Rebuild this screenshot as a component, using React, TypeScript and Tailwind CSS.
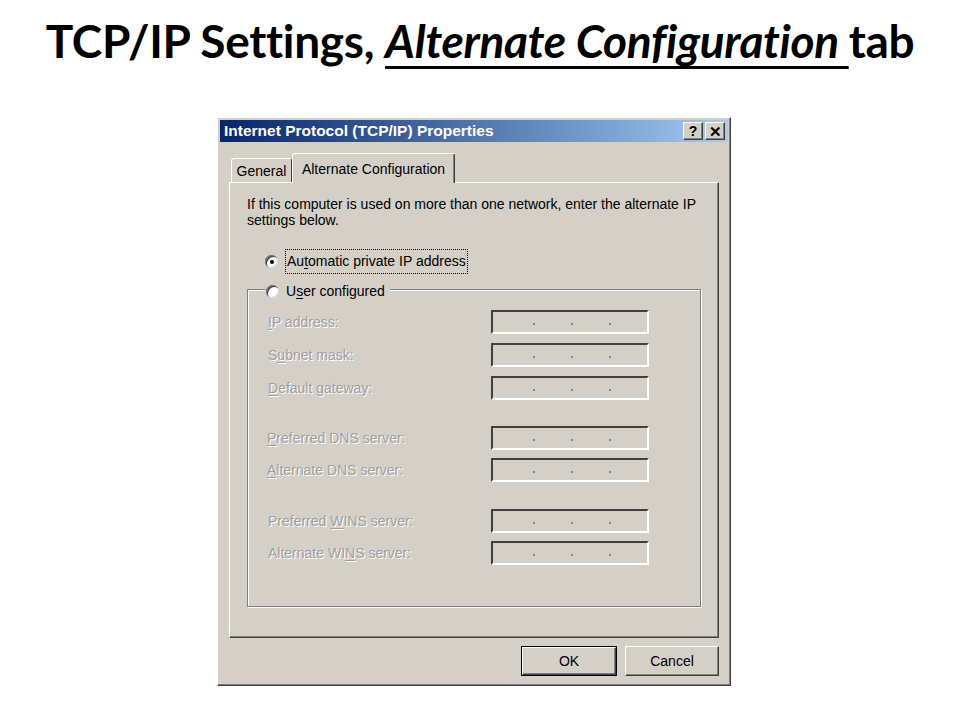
import React from "react";

const ui = "font-['Liberation_Sans',Arial,sans-serif]";

const raised =
  "border border-t-white border-l-white border-r-[#404040] border-b-[#404040] shadow-[inset_-1px_-1px_0_#808080]";

const Radio = ({ checked }: { checked?: boolean }) => (
  <span className="relative inline-flex h-[13px] w-[13px] shrink-0 items-center justify-center rounded-full bg-white shadow-[inset_1px_1px_0_#808080,inset_2px_2px_0_#404040,inset_-1px_-1px_0_#d4d0c8]">
    {checked ? <span className="h-[4px] w-[4px] rounded-full bg-black" /> : null}
  </span>
);

const Key = ({ children }: { children: React.ReactNode }) => <span className="underline underline-offset-2">{children}</span>;

const IpField = () => (
  <div className="flex h-[24px] w-[158px] items-center gap-[36px] border-2 border-t-[#404040] border-l-[#404040] border-r-white border-b-white pl-[40px] pt-[4px]">
    <span className="h-[2px] w-[2px] bg-[#8a8a8a]" />
    <span className="h-[2px] w-[2px] bg-[#8a8a8a]" />
    <span className="h-[2px] w-[2px] bg-[#8a8a8a]" />
  </div>
);

const Row = ({ label, mt, labelX = "pl-[20px]" }: { label: React.ReactNode; mt: string; labelX?: string }) => (
  <div className={`flex h-[24px] items-center ${mt}`}>
    <div className={`w-[243px] ${labelX} text-[#9f9f9f] [text-shadow:1px_1px_0_#ffffff]`}>{label}</div>
    <IpField />
  </div>
);

const App = () => {
  return (
    <div className="h-[720px] w-[960px] bg-white">
      <h1 className="whitespace-nowrap pt-[11px] text-center font-['Lato',sans-serif] text-[46px] font-bold leading-[60px] tracking-[-0.3px] text-black [font-variant-ligatures:none]">
        TCP/IP Settings,{" "}
        <span className="italic underline decoration-[3px] underline-offset-[8px]">Alternate Configuration </span>
        tab
      </h1>

      <div className="pl-[217px] pt-[46px]">
        <div className={`flex h-[569px] w-[514px] flex-col bg-[#d4d0c8] p-[2px] ${raised} ${ui} text-[14px] text-black`}>
          <div className="flex h-[22px] items-center justify-between bg-linear-to-r from-[#0a246a] to-[#a6caf0] pl-[4px] pr-[3px]">
            <span className="text-[15.5px] font-bold text-white">Internet Protocol (TCP/IP) Properties</span>
            <div className="flex gap-[2px]">
              <button className={`flex h-[18px] w-[20px] items-center justify-center bg-[#d4d0c8] text-[14px] font-bold leading-none ${raised}`}>?</button>
              <button className={`flex h-[18px] w-[20px] items-center justify-center bg-[#d4d0c8] text-[15px] font-bold leading-none ${raised}`}>✕</button>
            </div>
          </div>

          <div className="flex flex-col px-[9px] pt-[11px]">
            <div className="relative z-10 flex h-[29px] items-end pl-[2px]">
              <div className="flex h-[24px] w-[61px] items-center justify-center rounded-t-[3px] border border-b-0 border-t-white border-l-white border-r-[#404040] pt-[1px]">
                General
              </div>
              <div className="-mb-[1px] flex h-[30px] w-[163px] items-start justify-center rounded-t-[3px] border border-b-0 border-t-white border-l-white border-r-[#404040] bg-[#d4d0c8] pt-[5px] shadow-[inset_-1px_0_0_#808080]">
                Alternate Configuration
              </div>
            </div>

            <div className={`flex h-[456px] flex-col bg-[#d4d0c8] px-[17px] ${raised}`}>
              <p className="pt-[13px] leading-[16px]">
                If this computer is used on more than one network, enter the alternate IP settings below.
              </p>

              <div className="mt-[21px] flex items-center gap-[7px] pl-[18px]">
                <Radio checked />
                <span className="border border-dotted border-black px-[1px] py-[1px]">
                  Au<Key>t</Key>omatic private IP address
                </span>
              </div>

              <div className="relative mt-[15px] h-[318px] border border-[#808080] shadow-[1px_1px_0_#ffffff,inset_1px_1px_0_#ffffff]">
                <div className="absolute -top-[9px] left-[17px] flex items-center gap-[7px] bg-[#d4d0c8] pr-[5px] pl-[1px]">
                  <Radio />
                  <span>
                    U<Key>s</Key>er configured
                  </span>
                </div>

                <div className="flex flex-col pt-[20px]">
                  <Row mt="" label={<><Key>I</Key>P address:</>} />
                  <Row mt="mt-[9px]" label={<>S<Key>u</Key>bnet mask:</>} />
                  <Row mt="mt-[9px]" label={<><Key>D</Key>efault gateway:</>} />
                  <Row mt="mt-[26px]" labelX="pl-[19px]" label={<><Key>P</Key>referred DNS server:</>} />
                  <Row mt="mt-[8px]" labelX="pl-[19px]" label={<><Key>A</Key>lternate DNS server:</>} />
                  <Row mt="mt-[27px]" label={<>Preferred <Key>W</Key>INS server:</>} />
                  <Row mt="mt-[8px]" label={<>Alternate WI<Key>N</Key>S server:</>} />
                </div>
              </div>
            </div>

            <div className="mt-[8px] flex justify-end gap-[8px]">
              <button className="h-[30px] w-[96px] border border-black bg-[#d4d0c8] p-0">
                <div className={`flex h-full w-full items-center justify-center ${raised}`}>OK</div>
              </button>
              <button className={`flex h-[30px] w-[94px] items-center justify-center bg-[#d4d0c8] ${raised}`}>Cancel</button>
            </div>
          </div>
        </div>
      </div>
    </div>
  );
};

export default App;
